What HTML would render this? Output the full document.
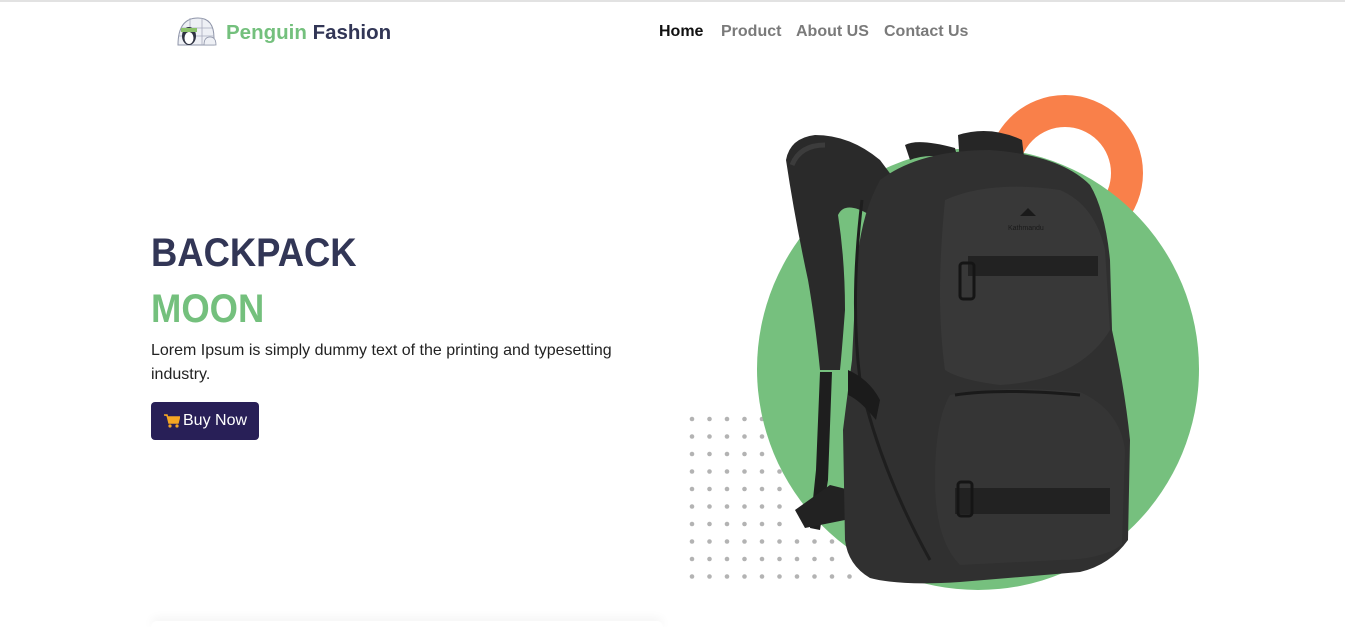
<!DOCTYPE html>
<html><head><meta charset="utf-8"><style>
*{margin:0;padding:0;box-sizing:border-box}
html,body{width:1345px;height:627px;overflow:hidden}
body{background:#fff;font-family:"Liberation Sans",sans-serif;position:relative}
.topline{position:absolute;left:0;top:0;width:1345px;height:2px;background:#e2e2e2}
.brand{position:absolute;left:226px;top:21px;font-size:20.5px;font-weight:bold;color:#74c07d}
.brand span{color:#323656}
.nav{position:absolute;top:23px;font-size:16px;font-weight:bold;color:#7a7a7a}
h1{position:absolute;left:151px;font-size:40px;font-weight:bold;line-height:1;transform:scaleX(0.91);transform-origin:left}
p.desc{position:absolute;left:151px;top:339px;width:480px;font-size:16px;line-height:24px;color:#222}
.btn{position:absolute;left:151px;top:402px;width:108px;height:38px;background:#281f57;border-radius:4px;color:#fff;font-size:16px;line-height:38px;padding-left:32px}
.card{position:absolute;left:151px;top:621px;width:512px;height:6px;background:#fff;border-radius:8px 8px 0 0;box-shadow:0 -2px 10px rgba(0,0,0,0.07)}
svg{position:absolute;left:0;top:0}
</style></head><body>
<div class="topline"></div>
<svg width="1345" height="627">
 <g fill="#b3b3b3">
  <circle cx="692" cy="419" r="2.3"/><circle cx="709.5" cy="419" r="2.3"/><circle cx="727" cy="419" r="2.3"/><circle cx="744.5" cy="419" r="2.3"/><circle cx="762" cy="419" r="2.3"/>
  <circle cx="692" cy="436.5" r="2.3"/><circle cx="709.5" cy="436.5" r="2.3"/><circle cx="727" cy="436.5" r="2.3"/><circle cx="744.5" cy="436.5" r="2.3"/><circle cx="762" cy="436.5" r="2.3"/>
  <circle cx="692" cy="454" r="2.3"/><circle cx="709.5" cy="454" r="2.3"/><circle cx="727" cy="454" r="2.3"/><circle cx="744.5" cy="454" r="2.3"/><circle cx="762" cy="454" r="2.3"/>
  <circle cx="692" cy="471.5" r="2.3"/><circle cx="709.5" cy="471.5" r="2.3"/><circle cx="727" cy="471.5" r="2.3"/><circle cx="744.5" cy="471.5" r="2.3"/><circle cx="762" cy="471.5" r="2.3"/><circle cx="779.5" cy="471.5" r="2.3"/>
  <circle cx="692" cy="489" r="2.3"/><circle cx="709.5" cy="489" r="2.3"/><circle cx="727" cy="489" r="2.3"/><circle cx="744.5" cy="489" r="2.3"/><circle cx="762" cy="489" r="2.3"/><circle cx="779.5" cy="489" r="2.3"/>
  <circle cx="692" cy="506.5" r="2.3"/><circle cx="709.5" cy="506.5" r="2.3"/><circle cx="727" cy="506.5" r="2.3"/><circle cx="744.5" cy="506.5" r="2.3"/><circle cx="762" cy="506.5" r="2.3"/><circle cx="779.5" cy="506.5" r="2.3"/>
  <circle cx="692" cy="524" r="2.3"/><circle cx="709.5" cy="524" r="2.3"/><circle cx="727" cy="524" r="2.3"/><circle cx="744.5" cy="524" r="2.3"/><circle cx="762" cy="524" r="2.3"/><circle cx="779.5" cy="524" r="2.3"/>
  <circle cx="692" cy="541.5" r="2.3"/><circle cx="709.5" cy="541.5" r="2.3"/><circle cx="727" cy="541.5" r="2.3"/><circle cx="744.5" cy="541.5" r="2.3"/><circle cx="762" cy="541.5" r="2.3"/><circle cx="779.5" cy="541.5" r="2.3"/><circle cx="797" cy="541.5" r="2.3"/><circle cx="814.5" cy="541.5" r="2.3"/><circle cx="832" cy="541.5" r="2.3"/>
  <circle cx="692" cy="559" r="2.3"/><circle cx="709.5" cy="559" r="2.3"/><circle cx="727" cy="559" r="2.3"/><circle cx="744.5" cy="559" r="2.3"/><circle cx="762" cy="559" r="2.3"/><circle cx="779.5" cy="559" r="2.3"/><circle cx="797" cy="559" r="2.3"/><circle cx="814.5" cy="559" r="2.3"/><circle cx="832" cy="559" r="2.3"/>
  <circle cx="692" cy="576.5" r="2.3"/><circle cx="709.5" cy="576.5" r="2.3"/><circle cx="727" cy="576.5" r="2.3"/><circle cx="744.5" cy="576.5" r="2.3"/><circle cx="762" cy="576.5" r="2.3"/><circle cx="779.5" cy="576.5" r="2.3"/><circle cx="797" cy="576.5" r="2.3"/><circle cx="814.5" cy="576.5" r="2.3"/><circle cx="832" cy="576.5" r="2.3"/><circle cx="849.5" cy="576.5" r="2.3"/>
 </g>
 <g>
  <path d="M178 45 Q178 18 198 18 Q214 18 214 38 L214 45 Z" fill="#eef0f5" stroke="#8e94a8" stroke-width="1"/>
  <path d="M181 28 H212 M179 36 H214 M190 18 V45 M202 18 V45" stroke="#a7acbd" stroke-width="0.8"/>
  <ellipse cx="189" cy="36" rx="7" ry="9" fill="#2f3342"/>
  <ellipse cx="189" cy="38" rx="4.5" ry="6" fill="#fff"/>
  <rect x="181" y="28" width="16" height="4" fill="#8cc26b"/>
  <path d="M204 45 Q204 37 210 37 Q216 37 216 45 Z" fill="#eef0f5" stroke="#8e94a8" stroke-width="0.8"/>
 </g>
 <circle cx="1065" cy="173" r="62" fill="none" stroke="#f9804a" stroke-width="32"/>
 <circle cx="978" cy="369" r="221" fill="#76c07e"/>
 <g>
  <path d="M786 160 Q790 138 815 135 Q850 135 880 160 L895 180 L870 215 Q845 200 838 215 Q845 260 845 310 Q842 350 840 370 L820 370 Q815 320 808 280 Q795 220 786 160 Z" fill="#2a2a2a"/>
  <path d="M792 165 Q800 145 825 145" stroke="#3c3c3c" stroke-width="5" fill="none"/>
  <path d="M820 372 L832 372 L828 480 L820 530 L810 528 L816 470 Z" fill="#1e1e1e"/>
  <path d="M795 510 L830 485 L850 490 L845 520 L805 528 Z" fill="#222"/>
  <path d="M905 145 Q918 138 955 148 L958 160 Q930 152 910 160 Z" fill="#252525"/>
  <path d="M958 135 Q990 125 1022 140 L1025 165 L960 165 Z" fill="#262626"/>
  <path d="M880 180 Q920 150 990 150 Q1060 155 1090 185 Q1105 210 1110 260 L1112 330 Q1125 390 1130 440 L1128 540 Q1110 565 1080 572 L960 582 Q900 586 870 578 Q848 565 845 540 L843 430 Q848 390 852 360 L856 280 Q858 220 880 180 Z" fill="#303030"/>
  <path d="M945 200 Q990 180 1060 190 Q1095 205 1105 250 L1110 330 Q1080 380 1000 385 Q960 380 945 370 Q935 300 945 200 Z" fill="#383838"/>
  <path d="M950 395 Q1000 385 1080 392 Q1120 410 1125 450 L1122 545 Q1100 560 1060 560 L960 565 Q935 540 935 480 Q935 420 950 395 Z" fill="#353535"/>
  <path d="M955 395 Q1000 388 1080 395" stroke="#1a1a1a" stroke-width="3" fill="none"/>
  <path d="M862 200 Q850 300 860 380 Q880 470 930 560" stroke="#1e1e1e" stroke-width="3" fill="none"/>
  <rect x="968" y="256" width="130" height="20" fill="#222"/>
  <rect x="960" y="263" width="14" height="36" rx="3" fill="none" stroke="#151515" stroke-width="3"/>
  <rect x="955" y="488" width="155" height="26" fill="#222"/>
  <rect x="958" y="482" width="14" height="34" rx="3" fill="none" stroke="#151515" stroke-width="3"/>
  <path d="M848 370 Q870 380 880 400 L876 420 Q860 400 848 395 Z" fill="#1b1b1b"/>
  <path d="M1020 216 L1028 208 L1036 216 Z" fill="#1a1a1a"/>
  <text x="1008" y="230" font-size="7" fill="#1a1a1a" font-family="Liberation Sans">Kathmandu</text>
 </g>
</svg>
<div class="brand">Penguin <span>Fashion</span></div>
<div class="nav" style="left:659px;color:#111">Home</div>
<div class="nav" style="left:721px">Product</div>
<div class="nav" style="left:796px">About US</div>
<div class="nav" style="left:884px">Contact Us</div>
<h1 style="top:233px;color:#323656">BACKPACK</h1>
<h1 style="top:289px;color:#74c07d">MOON</h1>
<p class="desc">Lorem Ipsum is simply dummy text of the printing and typesetting industry.</p>
<div class="btn"><svg width="16" height="14" style="left:13px;top:12px" viewBox="0 0 16 14"><path d="M0 1 H3 L5 9 H14 L15.5 3 H4" fill="#f5a623" stroke="#f5a623" stroke-width="1.5"/><circle cx="6" cy="12" r="1.6" fill="#f5a623"/><circle cx="13" cy="12" r="1.6" fill="#f5a623"/></svg>Buy Now</div>
<div class="card"></div>
</body></html>
